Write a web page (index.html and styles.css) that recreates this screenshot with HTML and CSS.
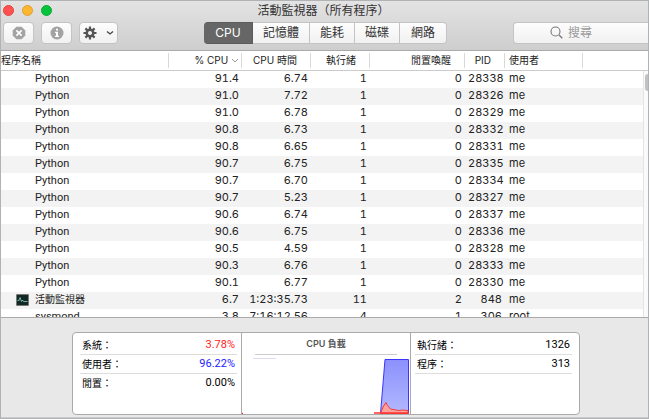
FILE: index.html
```html
<!DOCTYPE html>
<html lang="zh-Hant">
<head>
<meta charset="utf-8">
<title>活動監視器</title>
<link rel="stylesheet" href="styles.css">
</head>
<body>
<div class="window">
  <header class="chrome">
    <div class="titlebar">
      <div class="lights">
        <button class="light close" aria-label="關閉"></button>
        <button class="light minimize" aria-label="縮到最小"></button>
        <button class="light maximize" aria-label="放大"></button>
      </div>
      <h1>活動監視器（所有程序）</h1>
    </div>
    <div class="toolbar">
      <div class="actions">
        <button class="tool" aria-label="結束程序">
          <svg width="14" height="14" viewBox="0 0 14 14"><path d="M4.4.7h5.2l3.7 3.7v5.2l-3.7 3.7H4.4L.7 9.6V4.4z" fill="#a3a3a3"/><path d="M4.4 4.4l5.2 5.2M9.6 4.4L4.400 9.6" stroke="#fff" stroke-width="1.600"/></svg>
        </button>
        <button class="tool" aria-label="簡介">
          <svg width="14" height="14" viewBox="0 0 14 14"><circle cx="7" cy="7" r="6.500" fill="#a3a3a3"/><path d="M6 2.800h2v1.700H6zM5 5.700h3v4h1v1.200H5V9.700h1V6.900H5z" fill="#fff"/></svg>
        </button>
        <button class="tool wide" aria-label="動作">
          <svg width="14" height="14" viewBox="0 0 14 14"><g stroke="#555" stroke-width="2.200"><path d="M7 .5v13M.5 7h13M2.400 2.400l9.200 9.200M11.600 2.400l-9.200 9.200"/></g><circle cx="7" cy="7" r="4.500" fill="#555"/><circle cx="7" cy="7" r="2" fill="#f6f6f6"/></svg>
          <svg width="8" height="6" viewBox="0 0 8 6"><path d="M1 1.500l3 2.500 3-2.500" fill="none" stroke="#444" stroke-width="1.300"/></svg>
        </button>
      </div>
      <div class="tabs" role="tablist">
        <button class="tab active" role="tab" aria-selected="true">CPU</button>
        <button class="tab memory" role="tab" aria-selected="false">記憶體</button>
        <button class="tab" role="tab" aria-selected="false">能耗</button>
        <button class="tab" role="tab" aria-selected="false">磁碟</button>
        <button class="tab" role="tab" aria-selected="false">網路</button>
      </div>
      <label class="search">
        <svg width="13" height="13" viewBox="0 0 13 13"><circle cx="5.500" cy="5.500" r="4.500" fill="none" stroke="#777" stroke-width="1.100"/><path d="M9 9l3.300 3.300" stroke="#777" stroke-width="1.300"/></svg>
        <input type="search" placeholder="搜尋" aria-label="搜尋">
      </label>
    </div>
  </header>

  <main class="list">
    <table>
      <colgroup><col class="c-name"><col class="c-cpu"><col class="c-time"><col class="c-threads"><col class="c-wake"><col class="c-pid"><col class="c-user"><col></colgroup>
      <thead>
        <tr><th class="name">程序名稱</th><th class="sorted">% CPU <svg width="8" height="6" viewBox="0 0 8 6"><path d="M1 1l3 3 3-3" fill="none" stroke="#999"/></svg></th><th>CPU 時間</th><th>執行緒</th><th>閒置喚醒</th><th>PID</th><th class="user">使用者</th><th></th></tr>
      </thead>
      <tbody>
        <tr><td>Python</td><td>91.4</td><td>6.74</td><td>1</td><td>0</td><td>28338</td><td>me</td><td></td></tr>
        <tr><td>Python</td><td>91.0</td><td>7.72</td><td>1</td><td>0</td><td>28326</td><td>me</td><td></td></tr>
        <tr><td>Python</td><td>91.0</td><td>6.78</td><td>1</td><td>0</td><td>28329</td><td>me</td><td></td></tr>
        <tr><td>Python</td><td>90.8</td><td>6.73</td><td>1</td><td>0</td><td>28332</td><td>me</td><td></td></tr>
        <tr><td>Python</td><td>90.8</td><td>6.65</td><td>1</td><td>0</td><td>28331</td><td>me</td><td></td></tr>
        <tr><td>Python</td><td>90.7</td><td>6.75</td><td>1</td><td>0</td><td>28335</td><td>me</td><td></td></tr>
        <tr><td>Python</td><td>90.7</td><td>6.70</td><td>1</td><td>0</td><td>28334</td><td>me</td><td></td></tr>
        <tr><td>Python</td><td>90.7</td><td>5.23</td><td>1</td><td>0</td><td>28327</td><td>me</td><td></td></tr>
        <tr><td>Python</td><td>90.6</td><td>6.74</td><td>1</td><td>0</td><td>28337</td><td>me</td><td></td></tr>
        <tr><td>Python</td><td>90.6</td><td>6.75</td><td>1</td><td>0</td><td>28336</td><td>me</td><td></td></tr>
        <tr><td>Python</td><td>90.5</td><td>4.59</td><td>1</td><td>0</td><td>28328</td><td>me</td><td></td></tr>
        <tr><td>Python</td><td>90.3</td><td>6.76</td><td>1</td><td>0</td><td>28333</td><td>me</td><td></td></tr>
        <tr><td>Python</td><td>90.1</td><td>6.77</td><td>1</td><td>0</td><td>28330</td><td>me</td><td></td></tr>
        <tr><td class="with-icon"><div class="process"><svg width="13" height="12" viewBox="0 0 13 12"><rect width="13" height="12" rx="1" fill="#777"/><rect x="1" y="1" width="11" height="10" fill="#122824"/><path d="M1.500 6.500h1.500l1-3 1.500 4 1-1.500 1 1.500h4" fill="none" stroke="#8ed4c4" stroke-width=".8"/></svg>活動監視器</div></td><td>6.7</td><td>1:23:35.73</td><td>11</td><td>2</td><td>848</td><td>me</td><td></td></tr>
        <tr><td>sysmond</td><td>3.8</td><td>7:16:12.56</td><td>4</td><td>1</td><td>306</td><td>root</td><td></td></tr>
      </tbody>
    </table>
    <div class="scroller"><div class="thumb"></div></div>
  </main>

  <footer class="summary">
    <div class="panel">
      <dl class="stats">
        <div><dt>系統：</dt><dd class="system">3.78%</dd></div>
        <div><dt>使用者：</dt><dd class="userload">96.22%</dd></div>
        <div><dt>閒置：</dt><dd>0.00%</dd></div>
      </dl>
      <section class="load">
        <h2>CPU 負載</h2>
        <svg class="chart" viewBox="0 0 168 58" preserveAspectRatio="none">
          <defs><linearGradient id="fill" x1="0" y1="0" x2="0" y2="1"><stop offset="0" stop-color="#8b91fb"/><stop offset="1" stop-color="#b2b8ff"/></linearGradient></defs>
          <path d="M11 2.500h23" stroke="#dcdcf5"/>
          <path d="M138.500 57.500l4.500-54h23.500v54z" fill="url(#fill)" stroke="#3d35ff"/>
          <path d="M138.500 57.500l2.500-6.500 3-4.500 1.500 3 3 3.500 8 1.500 4-.5 5.500.5v3z" fill="#ffa19c" stroke="#f4392f"/>
          <path d="M132 57h35M0 57.500h1" stroke="#f33" stroke-width="1.500"/>
        </svg>
      </section>
      <dl class="stats counts">
        <div><dt>執行緒：</dt><dd>1326</dd></div>
        <div><dt>程序：</dt><dd>313</dd></div>
      </dl>
    </div>
  </footer>
</div>
</body>
</html>
```
FILE: styles.css
```css
* { box-sizing: border-box; }

body {
  margin: 0;
  color: #222;
  font: 11px/17px Inter, "Noto Sans CJK TC", sans-serif;
}

button, input { font: inherit; color: inherit; }
h1, h2, dl, dd { margin: 0; }
svg { flex: none; }

.window {
  display: flex;
  flex-direction: column;
  height: 100vh;
  border: 1px solid #b0b3b3;
  background: #e8e8e8;
  overflow: hidden;
}

.chrome {
  flex: none;
  background: linear-gradient(#e3e3e3, #cecece);
  border-bottom: 1px solid #aaa;
}

.titlebar {
  display: grid;
  grid-template-columns: 1fr auto 1fr;
  align-items: center;
  height: 18px;
  padding: 0 4px 0 2px;
}
.titlebar h1 { font-size: 12px; font-weight: 400; color: #333; }
.lights { display: flex; gap: 8px; }
.light {
  width: 11px;
  height: 11px;
  padding: 0;
  border: 1px solid;
  border-radius: 50%;
}
.close { background: #ff5250; border-color: #e8403e; }
.minimize { background: #fdb62f; border-color: #e2a030; }
.maximize { background: #05c43c; border-color: #0aab32; }

.toolbar {
  display: grid;
  grid-template-columns: 1fr auto 1fr;
  align-items: center;
  height: 31px;
  padding: 0 0 4px 2px;
}
.actions { display: flex; gap: 7px; }
.tool, .tab, .search {
  height: 22px;
  border: 1px solid #c4c4c4;
  background: linear-gradient(#fdfdfd, #f1f1f1);
}
.tool {
  display: flex;
  align-items: center;
  justify-content: center;
  gap: 9px;
  width: 31px;
  padding: 0;
  border-radius: 4px;
}
.wide { width: 39px; }

.tabs { display: flex; }
.tab {
  width: 45px;
  padding: 0;
  border-left-width: 0;
  font-size: 12px;
  line-height: 18px;
  color: #333;
}
.tab:first-child { width: 49px; border-radius: 4px 0 0 4px; }
.tab:last-child { width: 47px; border-radius: 0 4px 4px 0; }
.tab.memory { width: 57px; }
.tab.active { background: #666; border-color: #5c5c5c; color: #fff; }

.search {
  display: flex;
  align-items: center;
  justify-content: center;
  gap: 5px;
  justify-self: end;
  width: 135px;
  padding-left: 12px;
  border-right: 0;
  border-radius: 4px 0 0 4px;
}
.search input {
  width: 56px;
  padding: 0;
  border: 0;
  outline: 0;
  background: none;
  font-size: 12px;
}
.search input::placeholder { color: #999; opacity: 1; }

.list {
  display: flex;
  align-items: flex-start;
  flex: 1;
  min-height: 0;
  overflow: hidden;
  position: relative;
  background: #fff;
  border-bottom: 1px solid #aaa;
}
table {
  width: 100%;
  table-layout: fixed;
  border-collapse: separate;
  border-spacing: 0;
}
.c-name { width: 168px; }
.c-cpu { width: 73px; }
.c-time { width: 69px; }
.c-threads { width: 59px; }
.c-wake { width: 95px; }
.c-pid { width: 40px; }
.c-user { width: 78px; }

th {
  height: 20px;
  padding: 0 14px 2px 0;
  border-bottom: 1px solid #ccc;
  background: linear-gradient(#d8d8d8, #d8d8d8) right center / 1px 15px no-repeat;
  font-size: 10px;
  line-height: 16px;
  font-weight: 400;
  text-align: right;
  white-space: nowrap;
}
th:last-child { background: none; }
th.name { text-align: left; }
th.sorted { padding-right: 3px; }
th.user { text-align: left; padding-left: 4px; }

td {
  height: 17px;
  padding: 0 3px 2px;
  line-height: 15px;
  text-align: right;
  white-space: nowrap;
  font-variant-numeric: tabular-nums;
}
td:first-child {
  padding-left: 34px;
  font-family: Roboto, "Noto Sans CJK TC", sans-serif;
  text-align: left;
}
td.with-icon:first-child { padding-left: 15px; font-size: 10px; }
td:nth-child(7) { padding-left: 4px; text-align: left; }
tbody tr:nth-child(even) { background: #f3f3f3; }
.process { display: flex; align-items: center; gap: 6px; }

.scroller {
  position: absolute;
  top: 20px;
  right: 0;
  bottom: 0;
  width: 5px;
  padding: 3px 0 0 1px;
  background: #fafafa;
  border-left: 1px solid #e4e4e4;
}
.thumb { height: 17px; border-radius: 3px 0 0 3px; background: #c1c1c1; }

.summary {
  flex: none;
  padding: 14px 68px 2px 71px;
  border-bottom: 1px solid #ccc;
}
.panel {
  display: grid;
  grid-template-columns: 84fr 85fr 84fr;
  height: 83px;
  border: 1px solid #aaa;
  border-radius: 4px;
  background: #fff;
  color: #000;
  overflow: hidden;
}
.stats { padding: 3px 4px 0 7px; font-size: 10px; }
.stats div {
  display: flex;
  justify-content: space-between;
  height: 19px;
  padding: 0 2px;
  border-bottom: 1px solid #ddd;
  line-height: 18px;
}
.stats:not(.counts) div:last-child { border: 0; }
.stats dd { font-family: Roboto, sans-serif; font-size: 11px; }
.stats.counts { padding: 3px 7px 0 4px; }
.stats .system { color: #f22; }
.stats .userload { color: #22f; }
.load {
  display: flex;
  flex-direction: column;
  border: solid #aaa;
  border-width: 0 1px;
}
.load h2 {
  height: 22px;
  margin: 0 13px;
  border-bottom: 1px solid #ccc;
  color: #555;
  font-size: 9px;
  font-weight: 600;
  line-height: 21px;
  text-align: center;
}
.chart { display: block; width: 100%; height: 58px; margin-top: 1px; }
```
